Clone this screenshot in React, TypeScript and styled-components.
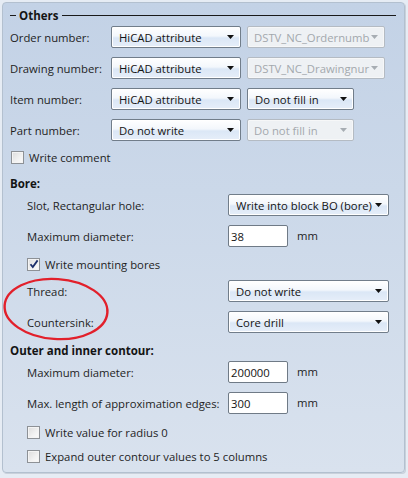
import React from "react";
import styled, { createGlobalStyle } from "styled-components";

const GlobalStyle = createGlobalStyle`
  html, body { margin: 0; padding: 0; }
  body {
    background: #e6ecf4;
    font-family: "Open Sans", "Noto Sans", sans-serif;
    font-size: 11.3px;
    color: #1e1e1e;
  }
`;

const Page = styled.div`
  width: 408px;
  height: 478px;
  padding: 2px 3px 0 2px;
  box-sizing: border-box;
  position: relative;
`;

const Panel = styled.div`
  width: 403px;
  height: 471px;
  box-sizing: border-box;
  border: 1px solid #b3c0cf;
  border-radius: 4px;
  box-shadow: 1px 1px 0 #c9d1db;
  background: linear-gradient(180deg, #c3d2e6 0%, #cbd8e9 40%, #d9e2ee 100%);
  padding: 2px 8px 0 7px;
  display: flex;
  flex-direction: column;
`;

const GroupHeader = styled.div`
  display: flex;
  align-items: center;
  height: 20px;
  margin-top: 0;
  font-weight: 700;
  font-size: 11.5px;
  color: #141414;
`;

const HeaderDash = styled.span<{ $grow?: boolean }>`
  height: 1px;
  background: #1a1a1a;
  width: ${(p) => (p.$grow ? "auto" : "6px")};
  flex: ${(p) => (p.$grow ? "1" : "none")};
  margin: ${(p) => (p.$grow ? "0 0 0 4px" : "0 3px 0 0")};
`;

const SectionTitle = styled.div<{ $mt: number }>`
  height: 20px;
  margin-top: ${(p) => p.$mt}px;
  display: flex;
  align-items: center;
  font-weight: 700;
  font-size: 11.5px;
  color: #141414;
`;

const Row = styled.div<{ $mt: number; $indent?: number }>`
  display: flex;
  align-items: center;
  height: 22px;
  margin-top: ${(p) => p.$mt}px;
  padding-left: ${(p) => p.$indent ?? 0}px;
`;

const Label = styled.span<{ $w: number }>`
  width: ${(p) => p.$w}px;
  flex: none;
  white-space: nowrap;
`;

const Combo = styled.div<{ $w: number; $disabled?: boolean; $ml?: number }>`
  width: ${(p) => p.$w}px;
  height: 22px;
  box-sizing: border-box;
  margin-left: ${(p) => p.$ml ?? 0}px;
  flex: none;
  display: flex;
  align-items: center;
  justify-content: space-between;
  padding: 0 6px 0 ${(p) => (p.$disabled ? 6 : 7)}px;
  border-radius: 2px;
  border: 1px solid ${(p) => (p.$disabled ? "#b4bbc3" : "#717d8a")};
  background: ${(p) =>
    p.$disabled
      ? "#eef1f4"
      : "linear-gradient(180deg, #ffffff 0%, #f3f7fc 45%, #dbe7f6 55%, #e6eef9 100%)"};
  color: ${(p) => (p.$disabled ? "#a3a8ad" : "#141414")};
  box-shadow: inset 0 0 0 1px ${(p) => (p.$disabled ? "#f6f7f8" : "#ffffff")};
  overflow: hidden;
  white-space: nowrap;
`;

const ComboText = styled.span`
  overflow: hidden;
  flex: 1;
`;

const Arrow = styled.svg<{ $disabled?: boolean }>`
  flex: none;
  width: 7px;
  height: 4px;
  margin-left: 1px;
  fill: ${(p) => (p.$disabled ? "#a7adb3" : "#111")};
`;

const TextInput = styled.div`
  width: 60px;
  height: 22px;
  box-sizing: border-box;
  flex: none;
  border: 1px solid #6f7a86;
  border-radius: 2px;
  background: #fff;
  display: flex;
  align-items: center;
  padding-left: 2px;
  color: #141414;
`;

const Unit = styled.span`
  margin-left: 9px;
  margin-top: -2px;
`;

const CheckRow = styled.div<{ $mt: number; $indent?: number }>`
  display: flex;
  align-items: center;
  height: 20px;
  margin-top: ${(p) => p.$mt}px;
  padding-left: ${(p) => p.$indent ?? 0}px;
`;

const Box = styled.span`
  width: 13px;
  height: 13px;
  box-sizing: border-box;
  flex: none;
  border: 1px solid #8d9196;
  background: linear-gradient(135deg, #dcdcdc 0%, #f2f2f2 60%, #fbfbfb 100%);
  box-shadow: inset 0 0 0 1px #f4f4f4;
  margin-right: 5px;
  display: flex;
  align-items: center;
  justify-content: center;
`;

const Ellipse = styled.svg`
  position: absolute;
  left: 0;
  top: 273px;
  width: 112px;
  height: 72px;
  pointer-events: none;
`;

const ArrowIcon = ({ disabled }: { disabled?: boolean }) => (
  <Arrow $disabled={disabled} viewBox="0 0 7 4">
    <polygon points="0,0 7,0 3.5,4" />
  </Arrow>
);

const Select = ({
  w,
  text,
  disabled,
  ml,
}: {
  w: number;
  text: string;
  disabled?: boolean;
  ml?: number;
}) => (
  <Combo $w={w} $disabled={disabled} $ml={ml}>
    <ComboText>{text}</ComboText>
    <ArrowIcon disabled={disabled} />
  </Combo>
);

const CheckBox = ({ checked }: { checked?: boolean }) => (
  <Box>
    {checked && (
      <svg width="10" height="10" viewBox="0 0 10 10">
        <path
          d="M1.5 5.2 L3.8 8 L8.6 1.4"
          fill="none"
          stroke="#1c2f6b"
          strokeWidth="1.8"
        />
      </svg>
    )}
  </Box>
);

export default function App() {
  return (
    <>
      <GlobalStyle />
      <Page>
        <Panel>
          <GroupHeader>
            <HeaderDash />
            Others
            <HeaderDash $grow />
          </GroupHeader>

          <Row $mt={1}>
            <Label $w={101}>Order number:</Label>
            <Select w={130} text="HiCAD attribute" />
            <Select w={138} ml={6} text="DSTV_NC_Ordernumb" disabled />
          </Row>
          <Row $mt={9}>
            <Label $w={101}>Drawing number:</Label>
            <Select w={130} text="HiCAD attribute" />
            <Select w={138} ml={6} text="DSTV_NC_Drawingnur" disabled />
          </Row>
          <Row $mt={9}>
            <Label $w={101}>Item number:</Label>
            <Select w={130} text="HiCAD attribute" />
            <Select w={107} ml={6} text="Do not fill in" />
          </Row>
          <Row $mt={9}>
            <Label $w={101}>Part number:</Label>
            <Select w={130} text="Do not write" />
            <Select w={107} ml={6} text="Do not fill in" disabled />
          </Row>

          <CheckRow $mt={6} $indent={1}>
            <CheckBox />
            Write comment
          </CheckRow>

          <SectionTitle $mt={6}>Bore:</SectionTitle>
          <Row $mt={1} $indent={17}>
            <Label $w={201}>Slot, Rectangular hole:</Label>
            <Select w={161} text="Write into block BO (bore)" />
          </Row>
          <Row $mt={9} $indent={17}>
            <Label $w={201}>Maximum diameter:</Label>
            <TextInput>38</TextInput>
            <Unit>mm</Unit>
          </Row>
          <CheckRow $mt={7} $indent={17}>
            <CheckBox checked />
            Write mounting bores
          </CheckRow>
          <Row $mt={6} $indent={17}>
            <Label $w={201}>Thread:</Label>
            <Select w={161} text="Do not write" />
          </Row>
          <Row $mt={9} $indent={17}>
            <Label $w={201}>Countersink:</Label>
            <Select w={161} text="Core drill" />
          </Row>

          <SectionTitle $mt={7}>Outer and inner contour:</SectionTitle>
          <Row $mt={1} $indent={17}>
            <Label $w={201}>Maximum diameter:</Label>
            <TextInput>200000</TextInput>
            <Unit>mm</Unit>
          </Row>
          <Row $mt={9} $indent={17}>
            <Label $w={201}>Max. length of approximation edges:</Label>
            <TextInput>300</TextInput>
            <Unit>mm</Unit>
          </Row>
          <CheckRow $mt={8} $indent={17}>
            <CheckBox />
            Write value for radius 0
          </CheckRow>
          <CheckRow $mt={4} $indent={17}>
            <CheckBox />
            Expand outer contour values to 5 columns
          </CheckRow>
        </Panel>
        <Ellipse viewBox="0 0 112 72">
          <ellipse
            cx="56"
            cy="36"
            rx="51.5"
            ry="30"
            fill="none"
            stroke="#e2202b"
            strokeWidth="2.4"
            transform="rotate(4 56 36)"
          />
        </Ellipse>
      </Page>
    </>
  );
}
